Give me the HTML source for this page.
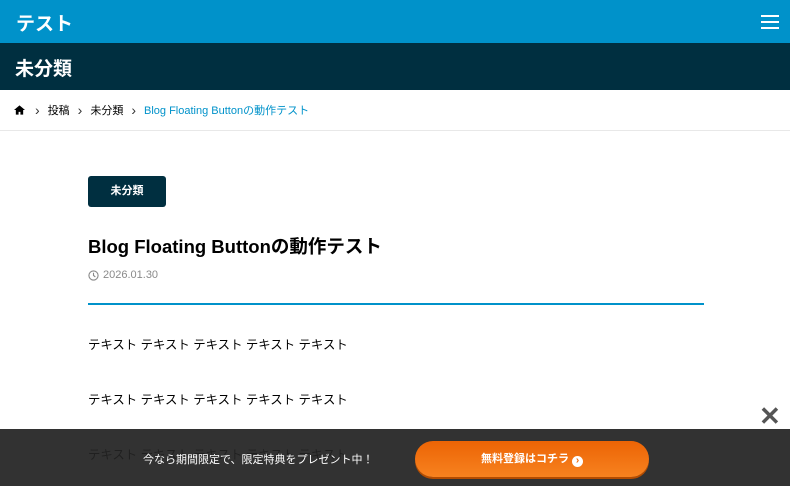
<!DOCTYPE html>
<html><head><meta charset="utf-8"><style>
*{margin:0;padding:0;box-sizing:border-box}
body{width:790px;height:486px;overflow:hidden;background:#fff;font-family:"Liberation Sans","Noto Sans CJK JP",sans-serif;position:relative;color:#000}
.hd{height:43px;background:#0092ca;color:#fff;font-size:19px;font-weight:bold;padding:9px 16px;position:relative}
.burger{position:absolute;right:11px;top:15px;width:18px}
.burger i{display:block;height:2px;background:#fff;margin-bottom:4px}
.cat{height:47px;background:#002f40;color:#fff;font-size:19px;font-weight:bold;padding:11px 15px}
.bc{height:41px;border-bottom:1px solid #e8e8e8;font-size:11px;padding:13px 14px;display:flex;align-items:center}
.bc span{margin-right:8px}
.bc .a{color:#333;margin-right:8px;font-size:14px;line-height:11px}
.tag{position:absolute;left:88px;top:176px;width:78px;height:31px;background:#002f40;color:#fff;font-size:11px;font-weight:bold;border-radius:3px;text-align:center;line-height:31px}
h1{position:absolute;left:88px;top:233px;font-size:18.5px;font-weight:bold}
.date{position:absolute;left:88px;top:268px;font-size:11px;color:#8a8a8a;display:flex;align-items:center;gap:4px}
.line{position:absolute;left:88px;top:303px;width:616px;height:2px;background:#0092ca}
.p{position:absolute;left:88px;font-size:12.4px}
.bar{position:absolute;left:0;top:429px;width:790px;height:57px;background:rgba(34,34,34,0.93)}
.bar .t{position:absolute;left:143px;top:22px;color:#fff;font-size:11px}
.btn{position:absolute;left:415px;top:12px;width:234px;height:36px;border-radius:18px;background:linear-gradient(#ec6405,#f7821f);color:#fff;font-size:11px;font-weight:bold;text-align:center;line-height:36px;box-shadow:0 2px 0 #b44c00}
.x{position:absolute;left:759px;top:401px;font-size:26px;font-weight:bold;color:#555;line-height:30px}
</style></head><body>
<div class="hd">テスト<div class="burger"><i></i><i></i><i></i></div></div>
<div class="cat">未分類</div>
<div class="bc">
<svg width="11" height="10" viewBox="0 0 12 10" style="margin-right:10px"><path d="M6 0L0 5h2v5h3V7h2v3h3V5h2z" fill="#000"/></svg>
<span class="a">›</span><span>投稿</span><span class="a">›</span><span>未分類</span><span class="a">›</span><span style="color:#0092ca">Blog Floating Buttonの動作テスト</span>
</div>
<div class="tag">未分類</div>
<h1>Blog Floating Buttonの動作テスト</h1>
<div class="date" style="top:269px"><svg width="11" height="11" viewBox="0 0 12 12"><circle cx="6" cy="6" r="5" fill="none" stroke="#888" stroke-width="1.2"/><path d="M6 3v3l2 1.5" fill="none" stroke="#888" stroke-width="1.2"/></svg>2026.01.30</div>
<div class="line"></div>
<div class="p" style="top:335px">テキスト テキスト テキスト テキスト テキスト</div>
<div class="p" style="top:390px">テキスト テキスト テキスト テキスト テキスト</div>
<div class="p" style="top:445px">テキスト テキスト テキスト テキスト テキスト</div>
<div class="x">✕</div>
<div class="bar"><div class="t">今なら期間限定で、限定特典をプレゼント中！</div>
<div class="btn">無料登録はコチラ <span style="display:inline-block;width:11px;height:11px;border-radius:50%;background:#fff;color:#ef6c0c;font-size:10px;line-height:10px;vertical-align:-1px">›</span></div></div>
</body></html>
